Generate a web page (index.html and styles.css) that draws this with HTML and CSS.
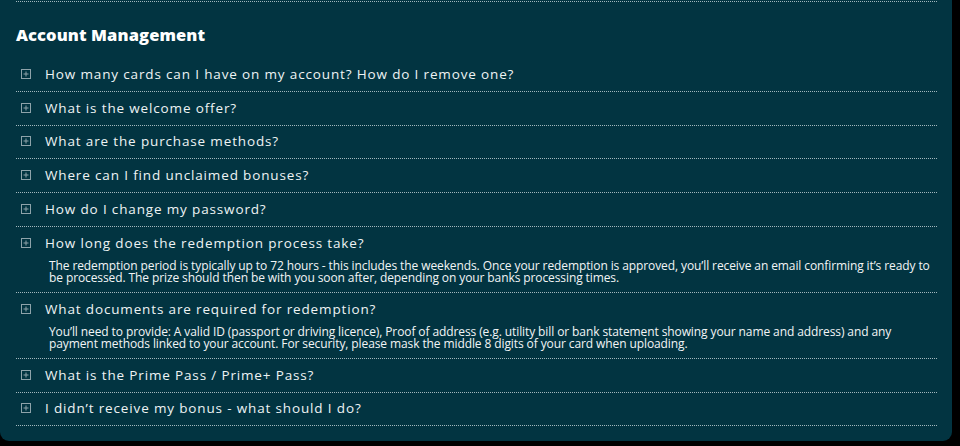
FILE: index.html
```html
<!DOCTYPE html>
<html lang="en">
<head>
<meta charset="utf-8">
<title>FAQ - Account Management</title>
<link rel="stylesheet" href="styles.css">
</head>
<body>
<div class="panel">
  <div class="prev-end"></div>
  <h2 class="section-title">Account Management</h2>
  <ul class="faq">
    <li class="faq-item">
      <div class="question"><svg class="toggle" viewBox="0 0 10 10"><rect x="0.5" y="0.5" width="9" height="9"/><path d="M5 2.5v5M2.5 5h5"/></svg><span>How many cards can I have on my account? How do I remove one?</span></div>
    </li>
    <li class="faq-item">
      <div class="question"><svg class="toggle" viewBox="0 0 10 10"><rect x="0.5" y="0.5" width="9" height="9"/><path d="M5 2.5v5M2.5 5h5"/></svg><span>What is the welcome offer?</span></div>
    </li>
    <li class="faq-item">
      <div class="question"><svg class="toggle" viewBox="0 0 10 10"><rect x="0.5" y="0.5" width="9" height="9"/><path d="M5 2.5v5M2.5 5h5"/></svg><span>What are the purchase methods?</span></div>
    </li>
    <li class="faq-item">
      <div class="question"><svg class="toggle" viewBox="0 0 10 10"><rect x="0.5" y="0.5" width="9" height="9"/><path d="M5 2.5v5M2.5 5h5"/></svg><span>Where can I find unclaimed bonuses?</span></div>
    </li>
    <li class="faq-item">
      <div class="question"><svg class="toggle" viewBox="0 0 10 10"><rect x="0.5" y="0.5" width="9" height="9"/><path d="M5 2.5v5M2.5 5h5"/></svg><span>How do I change my password?</span></div>
    </li>
    <li class="faq-item">
      <div class="question"><svg class="toggle" viewBox="0 0 10 10"><rect x="0.5" y="0.5" width="9" height="9"/><path d="M5 2.5v5M2.5 5h5"/></svg><span>How long does the redemption process take?</span></div>
      <p class="answer">The redemption period is typically up to 72 hours - this includes the weekends. Once your redemption is approved, you’ll receive an email confirming it’s ready to be processed. The prize should then be with you soon after, depending on your banks processing times.</p>
    </li>
    <li class="faq-item">
      <div class="question"><svg class="toggle" viewBox="0 0 10 10"><rect x="0.5" y="0.5" width="9" height="9"/><path d="M5 2.5v5M2.5 5h5"/></svg><span>What documents are required for redemption?</span></div>
      <p class="answer">You’ll need to provide: A valid ID (passport or driving licence), Proof of address (e.g. utility bill or bank statement showing your name and address) and any payment methods linked to your account. For security, please mask the middle 8 digits of your card when uploading.</p>
    </li>
    <li class="faq-item">
      <div class="question"><svg class="toggle" viewBox="0 0 10 10"><rect x="0.5" y="0.5" width="9" height="9"/><path d="M5 2.5v5M2.5 5h5"/></svg><span>What is the Prime Pass / Prime+ Pass?</span></div>
    </li>
    <li class="faq-item">
      <div class="question"><svg class="toggle" viewBox="0 0 10 10"><rect x="0.5" y="0.5" width="9" height="9"/><path d="M5 2.5v5M2.5 5h5"/></svg><span>I didn’t receive my bonus - what should I do?</span></div>
    </li>
  </ul>
</div>
</body>
</html>
```
FILE: styles.css
```css
html, body {
  margin: 0;
  padding: 0;
  background: #000;
}
body {
  width: 960px;
  height: 446px;
  overflow: hidden;
  font-family: "Open Sans", "Liberation Sans", sans-serif;
  color: #eef3f4;
}
.panel {
  width: 952px;
  height: 441px;
  box-sizing: border-box;
  background: #023441;
  border-radius: 0 0 9px 9px;
  padding: 0 15px 0 16px;
}
.prev-end {
  height: 1px;
  border-bottom: 1px dotted #a3b8be;
}
.section-title {
  margin: 0;
  padding-top: 22px;
  height: 34px;
  box-sizing: content-box;
  font-family: "Open Sans", sans-serif;
  font-weight: 800;
  font-size: 16.5px;
  letter-spacing: 0.1px;
  line-height: 22px;
  color: #ffffff;
}
.faq {
  list-style: none;
  margin: 0;
  padding: 0;
}
.faq-item {
  border-bottom: 1px dotted #a3b8be;
}
.question {
  display: flex;
  align-items: center;
  gap: 14px;
  height: 32.75px;
  padding-left: 5px;
  padding-bottom: 1px;
  box-sizing: border-box;
  font-size: 13.5px;
  letter-spacing: 0.85px;
  color: #eef3f4;
}
.toggle {
  width: 10px;
  height: 10px;
  flex: none;
  fill: none;
  stroke: #8ea3aa;
  stroke-width: 1;
}
.answer {
  margin: 0;
  padding: 0 0 8.25px 33px;
  font-size: 12px;
  line-height: 12px;
  letter-spacing: -0.1px;
  color: #f2f5f6;
}
```
